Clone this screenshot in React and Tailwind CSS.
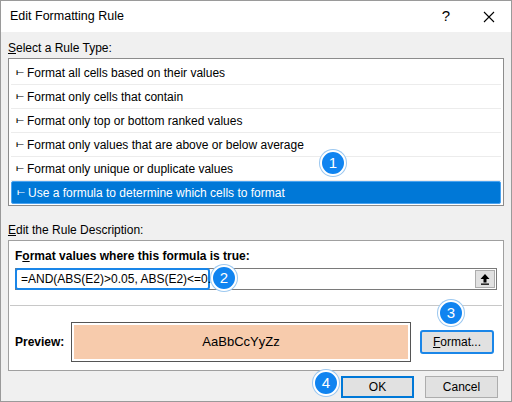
const Badge = ({ n, className }) => (
  <div
    className={`absolute w-[26px] h-[26px] rounded-full bg-[#1084f0] border-2 border-white shadow-[0_0_0_1px_#9cc8f0] text-white text-[15px] flex items-center justify-center ${className}`}
  >
    {n}
  </div>
);

const rules = [
  'Format all cells based on their values',
  'Format only cells that contain',
  'Format only top or bottom ranked values',
  'Format only values that are above or below average',
  'Format only unique or duplicate values',
];

export default function App() {
  return (
    <div className="relative w-[512px] h-[402px] bg-[#f0f0f0] border border-[#9a9a9a] text-[12px] text-black overflow-hidden" style={{ fontFamily: '"Liberation Sans", sans-serif' }}>
      {/* title bar */}
      <div className="h-[31px] bg-white flex items-center pl-[9px] pr-[14px]">
        <span className="text-[12.5px] flex-1">Edit Formatting Rule</span>
        <span className="text-[15px] mr-[33px]">?</span>
        <svg width="12" height="12" viewBox="0 0 12 12" className="mr-[2px]"><path d="M1 1L11 11M11 1L1 11" stroke="#000" strokeWidth="1.1" /></svg>
      </div>

      <div className="px-[7px]">
        <div className="mt-[7px] h-[18px] leading-[18px]"><u>S</u>elect a Rule Type:</div>
        <div className="mt-[1px] h-[148px] bg-white border border-[#8c8c8c] p-[2px]">
          {rules.map((r) => (
            <div key={r} className="h-[24px] flex items-center pl-[5px] border-b border-[#ececec]">
              <span className="text-[9px] mr-[4px]">⟝</span>{r}
            </div>
          ))}
          <div className="h-[23px] flex items-center pl-[5px] bg-[#0078d7] text-white border border-[#4aa3f0] rounded-[2px]">
            <span className="text-[9px] mr-[4px]">⟝</span>Use a formula to determine which cells to format
          </div>
        </div>

        <div className="mt-[15px] h-[18px] leading-[18px]"><u>E</u>dit the Rule Description:</div>
        <div className="mt-[1px] h-[131px] bg-white border border-[#a0a0a0] px-[6px]">
          <div className="mt-[7px] font-bold h-[16px] leading-[16px]">F<u>o</u>rmat values where this formula is true:</div>
          <div className="mt-[4px] h-[22px] border border-[#7a7a7a] flex items-center">
            <div className="h-[22px] -ml-[1px] -my-[1px] w-[195px] border-2 border-[#1a86e8] rounded-[3px] flex items-center pl-[4px] whitespace-nowrap">
              =AND(ABS(E2)&gt;0.05, ABS(E2)&lt;=0.1)
            </div>
            <div className="flex-1" />
            <div className="w-[20px] h-[18px] mr-[1px] bg-[#e1e1e1] border border-[#adadad] flex items-center justify-center">
              <svg width="10" height="11" viewBox="0 0 10 11"><path d="M5 0L9.5 5H6.5V8.5H3.5V5H0.5Z" fill="#000" /><rect x="1" y="9.5" width="8" height="1.3" fill="#000" /></svg>
            </div>
          </div>
          <div className="mt-[15px] border-t border-[#c8c8c8] -mx-[5px]" />
          <div className="mt-[16px] flex items-center">
            <span className="font-bold w-[56px]">Preview:</span>
            <div className="w-[340px] h-[40px] border border-[#555] p-[2px]">
              <div className="h-full bg-[#f7cbac] flex items-center justify-center text-[13px]">AaBbCcYyZz</div>
            </div>
            <div className="ml-[9px] w-[74px] h-[24px] bg-[#e1e1e1] border-2 border-[#1a86e8] rounded-[3px] flex items-center justify-center">
              <span><u>F</u>ormat...</span>
            </div>
          </div>
        </div>

        <div className="mt-[5px] flex justify-end gap-[11px] pr-[6px]">
          <div className="w-[73px] h-[22px] bg-[#e1e1e1] border-2 border-[#0078d7] flex items-center justify-center">OK</div>
          <div className="w-[73px] h-[22px] bg-[#e1e1e1] border border-[#adadad] flex items-center justify-center">Cancel</div>
        </div>
      </div>

      <Badge n="1" className="left-[319px] top-[149px]" />
      <Badge n="2" className="left-[210px] top-[264px]" />
      <Badge n="3" className="left-[437px] top-[299px]" />
      <Badge n="4" className="left-[312px] top-[369px]" />
    </div>
  );
}
